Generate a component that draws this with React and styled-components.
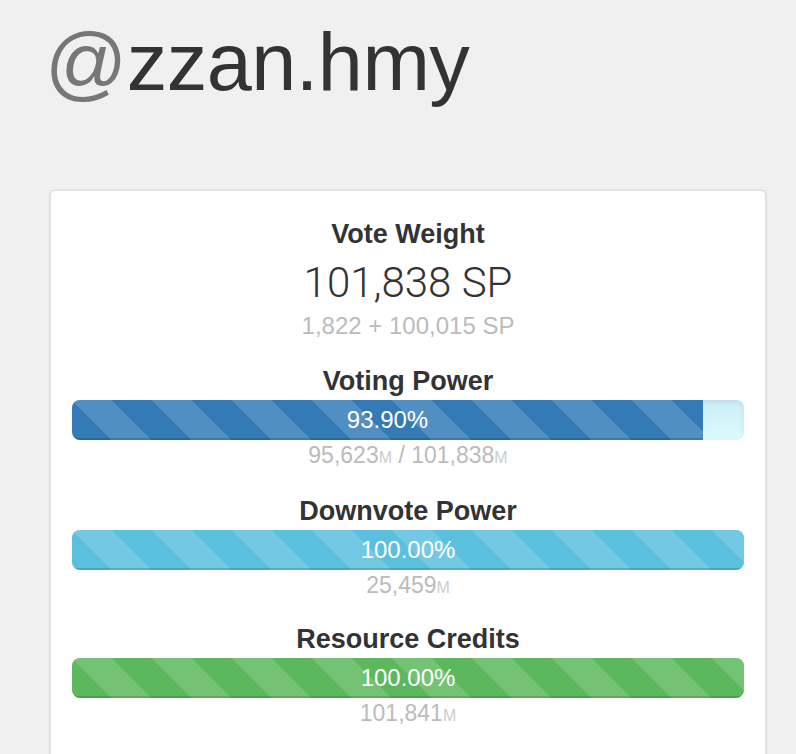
import styled, { createGlobalStyle } from 'styled-components'

const GlobalStyle = createGlobalStyle`
    html, body {
        margin: 0;
        padding: 0;
        background: #f0f0f0;
    }
    body {
        font-family: "Liberation Sans", Arial, Helvetica, sans-serif;
        color: #333;
    }
`

const bars = [
    {
        title: 'Voting Power',
        percent: 93.9,
        label: '93.90%',
        color: '#337ab7',
        parts: ['95,623', '101,838'],
    },
    {
        title: 'Downvote Power',
        percent: 100,
        label: '100.00%',
        color: '#5bc0de',
        parts: ['25,459'],
    },
    {
        title: 'Resource Credits',
        percent: 100,
        label: '100.00%',
        color: '#5cb85c',
        parts: ['101,841'],
    },
]

const Amount = ({ parts }) => (
    <SubLabel>
        {parts.map((p, i) => (
            <span key={i}>
                {i > 0 && ' / '}
                {p}
                <Unit>M</Unit>
            </span>
        ))}
    </SubLabel>
)

const App = () => {
    return (
        <>
            <GlobalStyle />
            <Page>
                <Heading>
                    <At>@</At>zzan.hmy
                </Heading>
                <Card>
                    <Title>Vote Weight</Title>
                    <BigValue>101,838 SP</BigValue>
                    <Detail>1,822 + 100,015 SP</Detail>

                    {bars.map((b) => (
                        <Block key={b.title}>
                            <Title $tight>{b.title}</Title>
                            <Track>
                                <Fill $color={b.color} style={{ width: `${b.percent}%` }}>
                                    {b.label}
                                </Fill>
                            </Track>
                            <Amount parts={b.parts} />
                        </Block>
                    ))}
                </Card>
            </Page>
        </>
    )
}

export default App

const Page = styled.div`
    padding: 22px 0 0 49px;
    width: 718px;
`

const Heading = styled.h1`
    margin: 0 0 87px -4px;
    font-size: 81px;
    line-height: 80px;
    font-weight: 400;
    color: #333;
    letter-spacing: -0.5px;
`

const At = styled.span`
    color: #777;
`

const Card = styled.div`
    box-sizing: border-box;
    width: 718px;
    background: #fff;
    border: 2px solid #e2e2e2;
    border-radius: 6px;
    box-shadow: 0 1px 2px rgba(0, 0, 0, 0.05);
    padding: 25px 21px 60px;
    text-align: center;
`

const Title = styled.div`
    font-size: 27px;
    font-weight: 700;
    line-height: ${(p) => (p.$tight ? '37px' : '36px')};
    color: #333;
`

const BigValue = styled.div`
    margin-top: 9px;
    font-family: Roboto, "Liberation Sans", sans-serif;
    font-weight: 300;
    font-size: 42px;
    line-height: 44px;
    color: #333;
`

const Detail = styled.div`
    margin-top: 7px;
    font-size: 24px;
    line-height: 28px;
    color: #bbb;
`

const Block = styled.div`
    margin-top: 23px;
    & + & {
        margin-top: 20px;
    }
    & + & + & {
        margin-top: 18px;
    }
`

const Track = styled.div`
    display: flex;
    height: 40px;
    border-radius: 8px;
    overflow: hidden;
    background: linear-gradient(to bottom, #cbedf7, #dcfafd);
    box-shadow: inset 0 2px 4px rgba(0, 0, 0, 0.08);
`

const Fill = styled.div`
    display: flex;
    align-items: center;
    justify-content: center;
    height: 100%;
    color: #fff;
    font-size: 24px;
    background-color: ${(p) => p.$color};
    background-image: linear-gradient(
        45deg,
        rgba(255, 255, 255, 0.15) 25%,
        transparent 25%,
        transparent 50%,
        rgba(255, 255, 255, 0.15) 50%,
        rgba(255, 255, 255, 0.15) 75%,
        transparent 75%,
        transparent
    );
    background-size: 80px 80px;
    box-shadow: inset 0 -2px 0 rgba(0, 0, 0, 0.15);
`

const SubLabel = styled.div`
    font-size: 23px;
    line-height: 30px;
    color: #bbb;
`

const Unit = styled.span`
    font-size: 16px;
    color: #ccc;
`
